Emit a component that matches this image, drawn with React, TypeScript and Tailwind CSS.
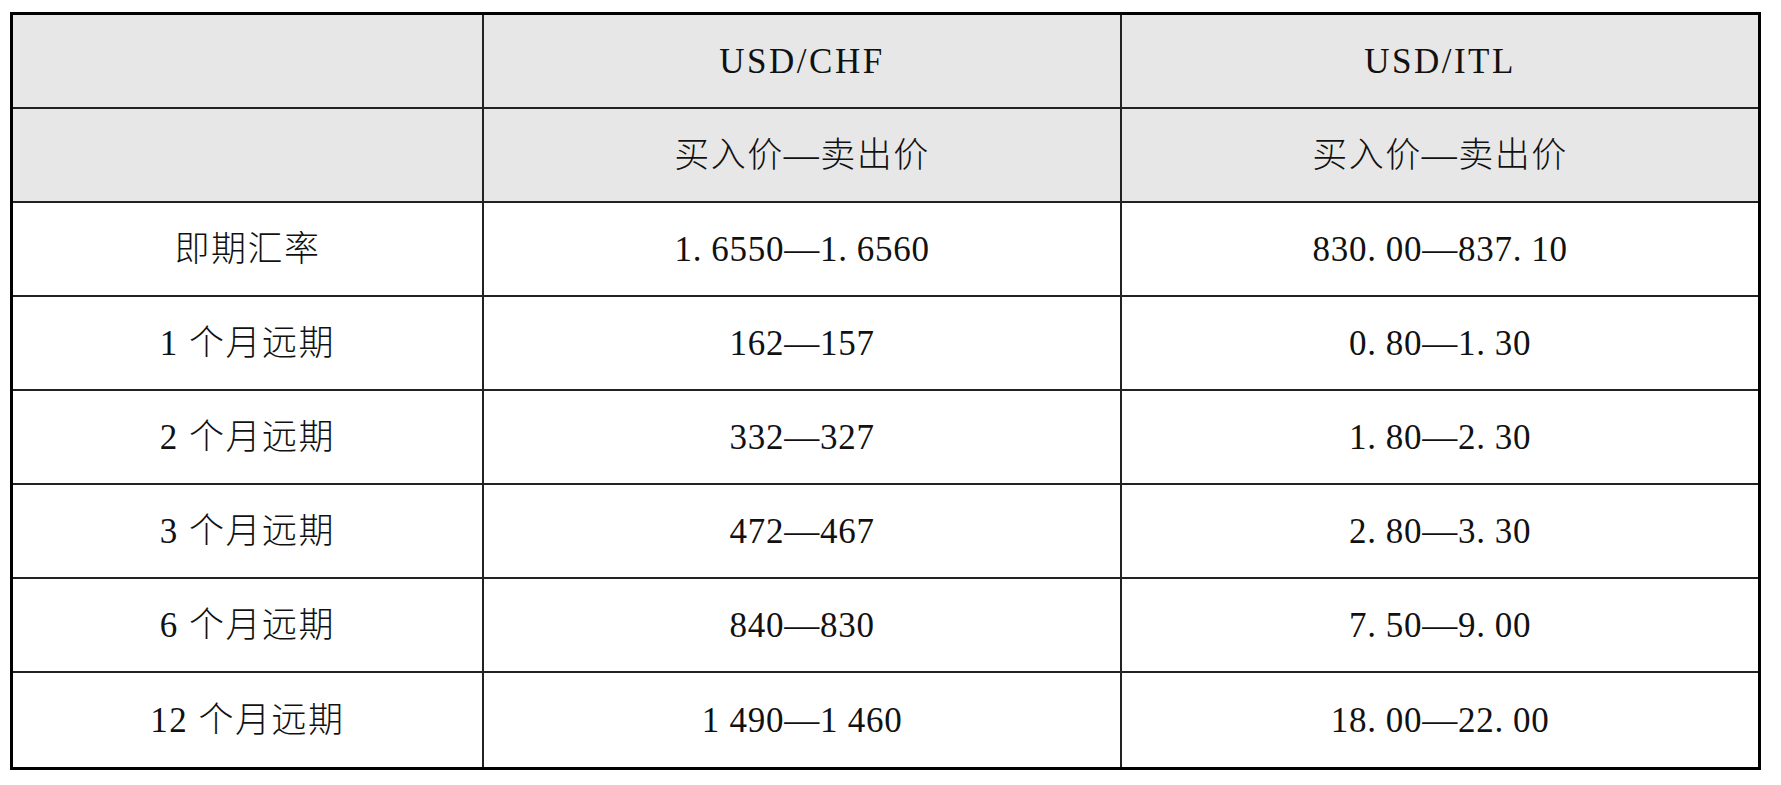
const head = ["", "USD/CHF", "USD/ITL"];
const sub = ["", "买入价—卖出价", "买入价—卖出价"];

const rows: [string, string, string][] = [
  ["即期汇率", "1.6550—1.6560", "830.00—837.10"],
  ["1 个月远期", "162—157", "0.80—1.30"],
  ["2 个月远期", "332—327", "1.80—2.30"],
  ["3 个月远期", "472—467", "2.80—3.30"],
  ["6 个月远期", "840—830", "7.50—9.00"],
  ["12 个月远期", "1 490—1 460", "18.00—22.00"],
];

const Num = ({ value }: { value: string }) => (
  <span className="tracking-[0.75px]">
    {value.split(/(\.)/).map((part, i) =>
      part === "." ? (
        <span key={i} className="mr-[9px]">
          .
        </span>
      ) : (
        <span key={i}>{part}</span>
      )
    )}
  </span>
);

const Cell = ({
  children,
  col,
  last,
  shaded,
}: {
  children?: React.ReactNode;
  col: number;
  last: boolean;
  shaded?: boolean;
}) => (
  <div
    className={[
      "flex items-center justify-center",
      col < 2 ? "border-r-2 border-[#222]" : "",
      last ? "" : "border-b-2 border-[#222]",
      shaded ? "bg-[#e7e7e7]" : "bg-white",
    ].join(" ")}
  >
    {children}
  </div>
);

export default function App() {
  return (
    <div className="min-h-screen bg-white pl-[10px] pt-[12px] font-['Liberation_Serif','Noto_Sans_CJK_SC',serif] text-[35px] font-light leading-none text-[#111]">
      <div className="grid w-[1751px] grid-cols-[471px_638px_636px] grid-rows-[repeat(8,94px)] border-[3px] border-black">
        {head.map((h, i) => (
          <Cell key={`h${i}`} col={i} last={false} shaded>
            <span className="tracking-[2.5px]">{h}</span>
          </Cell>
        ))}
        {sub.map((h, i) => (
          <Cell key={`s${i}`} col={i} last={false} shaded>
            <span className="tracking-[1.5px]">{h}</span>
          </Cell>
        ))}
        {rows.map((r, ri) => (
          <>
            <Cell key={`r${ri}a`} col={0} last={ri === rows.length - 1}>
              <span className="tracking-[1.5px]">{r[0]}</span>
            </Cell>
            <Cell key={`r${ri}b`} col={1} last={ri === rows.length - 1}>
              <Num value={r[1]} />
            </Cell>
            <Cell key={`r${ri}c`} col={2} last={ri === rows.length - 1}>
              <Num value={r[2]} />
            </Cell>
          </>
        ))}
      </div>
    </div>
  );
}
